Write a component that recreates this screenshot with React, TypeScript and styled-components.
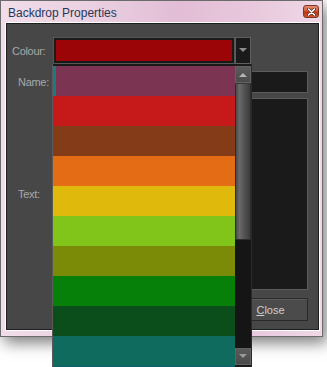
import React from 'react';
import styled, { createGlobalStyle } from 'styled-components';

const GlobalStyle = createGlobalStyle`
  html, body, #root {
    height: 100%;
  }
  html {
    overflow: hidden;
  }
  body {
    margin: 0;
    padding: 0;
    background: #ffffff;
    font-family: "Liberation Sans", Arial, sans-serif;
  }
`;

const swatches = [
  '#7b3553',
  '#c61a1a',
  '#843b18',
  '#e46c14',
  '#dfba0d',
  '#81c51b',
  '#7b8a07',
  '#078009',
  '#0b4d1b',
  '#0e6b5d',
  '#0e5f6b',
];

const Window = styled.div`
  width: 323px;
  height: 337px;
  box-sizing: border-box;
  border: 1px solid #6b6b6b;
  padding-bottom: 5px;
  display: flex;
  flex-direction: column;
  background: linear-gradient(90deg, #f1dde9 0%, #eacfe0 30%, #e2bdd5 55%, #e8c8dc 78%, #efd8e6 100%);
  box-shadow: 4px 6px 14px rgba(0, 0, 0, 0.5);
`;

const TitleBar = styled.div`
  height: 21px;
  flex: none;
  display: flex;
  justify-content: space-between;
  padding: 0 3px 0 7px;
`;

const TitleText = styled.div`
  padding-top: 5px;
  font-size: 12px;
  line-height: 14px;
  color: #1e395b;
`;

const CloseGlyph = styled.div`
  margin-top: 4px;
  width: 16px;
  height: 13px;
  box-sizing: border-box;
  border: 1px solid #7e3426;
  border-radius: 3px;
  background: linear-gradient(180deg, #e58f74 0%, #d2583a 45%, #bb3514 55%, #cc5530 100%);
  display: flex;
  align-items: center;
  justify-content: center;
`;

const ClientFrame = styled.div`
  flex: 1;
  margin: 0 2px 0 4px;
  border: 1px solid #ffffff;
  display: flex;
`;

const Client = styled.div`
  flex: 1;
  border: 1px solid #1e1e1e;
  background: #474747;
  padding: 13px 10px 0 0;
  display: flex;
  flex-direction: column;
`;

const Row = styled.div<{ $top: number; $height: number }>`
  display: flex;
  align-items: center;
  margin-top: ${p => p.$top}px;
  height: ${p => p.$height}px;
`;

const Label = styled.div<{ $indent: number }>`
  width: 46px;
  flex: none;
  box-sizing: border-box;
  padding-left: ${p => p.$indent}px;
  font-size: 11px;
  letter-spacing: -0.3px;
  color: #a9a9a9;
`;

const Field = styled.div`
  flex: 1;
  align-self: stretch;
  box-sizing: border-box;
  border: 1px solid #5c5c5c;
  background: #1a1a1a;
`;

const Combo = styled.div`
  position: relative;
  width: 198px;
  align-self: stretch;
  display: flex;
`;

const ComboValue = styled.div`
  flex: 1;
  box-sizing: border-box;
  border: 1px solid #565656;
  padding: 2px;
  background: #1a1a1a;
  display: flex;
`;

const Swatch = styled.div<{ $color: string }>`
  flex: 1;
  background: ${p => p.$color};
`;

const ArrowButton = styled.div`
  width: 16px;
  box-sizing: border-box;
  border: 1px solid #5e5e5e;
  background: #1a1a1a;
  display: flex;
  align-items: center;
  justify-content: center;
`;

const Popup = styled.div`
  position: absolute;
  top: 100%;
  left: -1px;
  width: 200px;
  height: 306px;
  box-sizing: border-box;
  border-left: 1px solid #5a5a5a;
  border-right: 1px solid #2a2a2a;
  padding-top: 2px;
  background: #1a1a1a;
  display: flex;
  z-index: 10;
`;

const ItemList = styled.div`
  flex: 1;
  overflow: hidden;
  display: flex;
  flex-direction: column;
`;

const Item = styled.div<{ $color: string; $focused?: boolean }>`
  height: 30px;
  flex: none;
  background: ${p => p.$color};
  box-shadow: ${p => (p.$focused ? 'inset 3px 0 0 #1c7b82' : 'none')};
`;

const ScrollBar = styled.div`
  width: 16px;
  flex: none;
  display: flex;
  flex-direction: column;
`;

const ScrollButton = styled.div`
  height: 17px;
  flex: none;
  box-sizing: border-box;
  border: 1px solid #626262;
  background: linear-gradient(180deg, #5a5a5a 0%, #4a4a4a 100%);
  display: flex;
  align-items: center;
  justify-content: center;
`;

const Thumb = styled.div`
  height: 157px;
  flex: none;
  box-sizing: border-box;
  border: 1px solid #2c2c2c;
  border-top-color: #383838;
  background: linear-gradient(90deg, #4a4a4a 0%, #6a6a6a 25%, #555555 55%, #3c3c3c 100%);
`;

const Track = styled.div`
  height: 108px;
  flex: none;
  background: #151515;
`;

const ButtonRow = styled.div`
  display: flex;
  justify-content: flex-end;
  margin-top: 8px;
  height: 23px;
`;

const PushButton = styled.div`
  width: 75px;
  box-sizing: border-box;
  border: 1px solid #2a2a2a;
  background: #4b4b4b;
  box-shadow: inset 1px 1px 0 #5a5a5a;
  font-size: 11px;
  color: #cfcfcf;
  display: flex;
  align-items: center;
  justify-content: center;
  u {
    text-decoration: underline;
  }
`;

const Triangle: React.FC<{ up?: boolean; color: string }> = ({ up, color }) => (
  <svg width="8" height="5" viewBox="0 0 8 5">
    <path d={up ? 'M0 5 L4 1 L8 5 Z' : 'M0 0 L8 0 L4 4 Z'} fill={color} />
  </svg>
);

const App: React.FC = () => (
  <>
    <GlobalStyle />
    <Window>
      <TitleBar>
        <TitleText>Backdrop Properties</TitleText>
        <CloseGlyph>
          <svg width="9" height="8" viewBox="0 0 9 8">
            <path d="M1.5 1 L7.5 7 M7.5 1 L1.5 7" stroke="#5a2a20" strokeWidth="3" strokeLinecap="round" />
            <path d="M1.5 1 L7.5 7 M7.5 1 L1.5 7" stroke="#ffffff" strokeWidth="1.6" strokeLinecap="round" />
          </svg>
        </CloseGlyph>
      </TitleBar>
      <ClientFrame>
        <Client>
          <Row $top={0} $height={27}>
            <Label $indent={5}>Colour:</Label>
            <Combo>
              <ComboValue>
                <Swatch $color="#9b0507" />
              </ComboValue>
              <ArrowButton>
                <Triangle color="#8c8c8c" />
              </ArrowButton>
              <Popup>
                <ItemList>
                  {swatches.map((c, i) => (
                    <Item key={c} $color={c} $focused={i === 0} />
                  ))}
                </ItemList>
                <ScrollBar>
                  <ScrollButton>
                    <Triangle up color="#b4b4b4" />
                  </ScrollButton>
                  <Thumb />
                  <Track />
                  <ScrollButton>
                    <Triangle color="#9a9a9a" />
                  </ScrollButton>
                </ScrollBar>
              </Popup>
            </Combo>
          </Row>
          <Row $top={7} $height={22}>
            <Label $indent={11}>Name:</Label>
            <Field />
          </Row>
          <Row $top={5} $height={192}>
            <Label $indent={11}>Text:</Label>
            <Field />
          </Row>
          <ButtonRow>
            <PushButton>
              <span>
                <u>C</u>lose
              </span>
            </PushButton>
          </ButtonRow>
        </Client>
      </ClientFrame>
    </Window>
  </>
);

export default App;
